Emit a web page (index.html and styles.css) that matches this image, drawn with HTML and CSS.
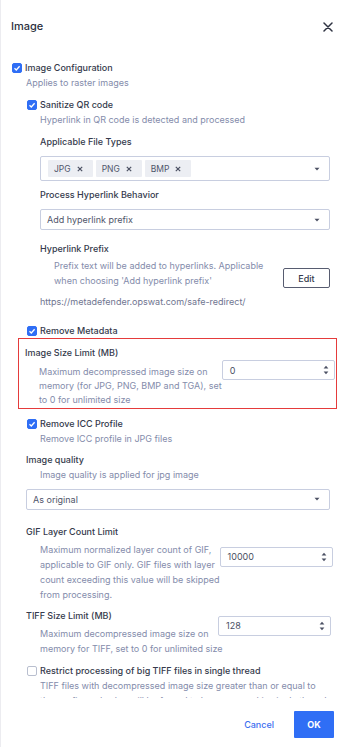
FILE: index.html
```html
<!DOCTYPE html>
<html lang="en">
<head>
<meta charset="utf-8">
<title>Image</title>
<link rel="stylesheet" href="styles.css">
</head>
<body>
<div class="dialog">
  <header class="header">
    <h1 class="title">Image</h1>
    <button class="close" aria-label="Close">
      <svg width="10" height="10" viewBox="0 0 10 10"><path d="M1 1L9 9M9 1L1 9" stroke="#2f3342" stroke-width="1.5" stroke-linecap="round"/></svg>
    </button>
  </header>

  <div class="body">
    <div class="check-row top-row">
      <span class="box on"><svg width="10" height="10" viewBox="0 0 10 10"><path d="M2.5 5.2L4.3 7L7.6 3.2" fill="none" stroke="#fff" stroke-width="1.3"/></svg></span>
      <span>Image Configuration</span>
    </div>
    <p class="desc ind1">Applies to raster images</p>

    <div class="check-row sub sanitize">
      <span class="box on"><svg width="10" height="10" viewBox="0 0 10 10"><path d="M2.5 5.2L4.3 7L7.6 3.2" fill="none" stroke="#fff" stroke-width="1.3"/></svg></span>
      <span>Sanitize QR code</span>
    </div>
    <p class="desc ind2">Hyperlink in QR code is detected and processed</p>

    <p class="label ind2 lbl-types">Applicable File Types</p>
    <div class="select multi ind2">
      <div class="chips">
        <span class="chip">JPG <svg width="6" height="6" viewBox="0 0 6 6"><path d="M0.8 0.8L5.2 5.2M5.2 0.8L0.8 5.2" stroke="#4b5063" stroke-width="1.2"/></svg></span>
        <span class="chip">PNG <svg width="6" height="6" viewBox="0 0 6 6"><path d="M0.8 0.8L5.2 5.2M5.2 0.8L0.8 5.2" stroke="#4b5063" stroke-width="1.2"/></svg></span>
        <span class="chip">BMP <svg width="6" height="6" viewBox="0 0 6 6"><path d="M0.8 0.8L5.2 5.2M5.2 0.8L0.8 5.2" stroke="#4b5063" stroke-width="1.2"/></svg></span>
      </div>
      <svg class="caret" width="6" height="4" viewBox="0 0 6 4"><path d="M0.5 0.8H5.5L3 3.4Z" fill="#4b5063"/></svg>
    </div>

    <p class="label ind2 lbl-process">Process Hyperlink Behavior</p>
    <div class="select ind2 sel-process">
      <span>Add hyperlink prefix</span>
      <svg class="caret" width="6" height="4" viewBox="0 0 6 4"><path d="M0.5 0.8H5.5L3 3.4Z" fill="#4b5063"/></svg>
    </div>

    <p class="label ind2 lbl-prefix">Hyperlink Prefix</p>
    <div class="prefix-row">
      <p class="desc">Prefix text will be added to hyperlinks. Applicable<br>when choosing 'Add hyperlink prefix'</p>
      <button class="edit">Edit</button>
    </div>
    <p class="url ind2">https://metadefender.opswat.com/safe-redirect/</p>

    <div class="check-row sub metadata">
      <span class="box on"><svg width="10" height="10" viewBox="0 0 10 10"><path d="M2.5 5.2L4.3 7L7.6 3.2" fill="none" stroke="#fff" stroke-width="1.3"/></svg></span>
      <span>Remove Metadata</span>
    </div>

    <div class="highlight">
      <div class="field">
        <div class="field-text">
          <p class="label">Image Size Limit (MB)</p>
          <p class="desc field-desc">Maximum decompressed image size on<br>memory (for JPG, PNG, BMP and TGA), set<br>to 0 for unlimited size</p>
        </div>
        <div class="number">
          <span>0</span>
          <svg class="spin" width="6" height="10" viewBox="0 0 6 10"><path d="M0.6 3.4H5.4L3 0.8Z M0.6 6.6H5.4L3 9.2Z" fill="#4b5063"/></svg>
        </div>
      </div>
    </div>

    <div class="check-row sub icc">
      <span class="box on"><svg width="10" height="10" viewBox="0 0 10 10"><path d="M2.5 5.2L4.3 7L7.6 3.2" fill="none" stroke="#fff" stroke-width="1.3"/></svg></span>
      <span>Remove ICC Profile</span>
    </div>
    <p class="desc ind2">Remove ICC profile in JPG files</p>

    <p class="label ind1 lbl-quality">Image quality</p>
    <p class="desc ind2">Image quality is applied for jpg image</p>
    <div class="select ind1 sel-quality">
      <span>As original</span>
      <svg class="caret" width="6" height="4" viewBox="0 0 6 4"><path d="M0.5 0.8H5.5L3 3.4Z" fill="#4b5063"/></svg>
    </div>

    <div class="field plain gif">
      <div class="field-text">
        <p class="label">GIF Layer Count Limit</p>
        <p class="desc field-desc">Maximum normalized layer count of GIF,<br>applicable to GIF only. GIF files with layer<br>count exceeding this value will be skipped<br>from processing.</p>
      </div>
      <div class="number">
        <span>10000</span>
        <svg class="spin" width="6" height="10" viewBox="0 0 6 10"><path d="M0.6 3.4H5.4L3 0.8Z M0.6 6.6H5.4L3 9.2Z" fill="#4b5063"/></svg>
      </div>
    </div>

    <div class="field plain tiff">
      <div class="field-text">
        <p class="label">TIFF Size Limit (MB)</p>
        <p class="desc field-desc nowrap">Maximum decompressed image size on<br>memory for TIFF, set to 0 for unlimited size</p>
      </div>
      <div class="number">
        <span>128</span>
        <svg class="spin" width="6" height="10" viewBox="0 0 6 10"><path d="M0.6 3.4H5.4L3 0.8Z M0.6 6.6H5.4L3 9.2Z" fill="#4b5063"/></svg>
      </div>
    </div>

    <div class="check-row sub restrict">
      <span class="box"></span>
      <span>Restrict processing of big TIFF files in single thread</span>
    </div>
    <p class="desc ind2">TIFF files with decompressed image size greater than or equal to<br>the configured value will be forced to be processed in single thread</p>
  </div>

  <footer class="footer">
    <button class="cancel">Cancel</button>
    <button class="ok">OK</button>
  </footer>
</div>
</body>
</html>
```

FILE: styles.css
```css
* { box-sizing: border-box; }
html, body { margin: 0; padding: 0; background: #fff; }
body {
  font-family: Inter, "Noto Sans", "Liberation Sans", sans-serif;
  font-size: 9px;
  color: #3a3e50;
}
p { margin: 0; }
button { font-family: inherit; cursor: pointer; }

.dialog {
  width: 341px;
  height: 747px;
  display: flex;
  flex-direction: column;
  background: #fff;
  border-left: 1px solid #ececf0;
}

.header {
  height: 44px;
  display: flex;
  align-items: flex-start;
  justify-content: space-between;
  padding: 18px 8px 0 10px;
}
.title {
  margin: 0;
  font-size: 11px;
  line-height: 16px;
  font-weight: 500;
  color: #2b2f3d;
}
.close {
  border: 0;
  background: none;
  padding: 0;
  margin-top: 4px;
  width: 10px;
  height: 10px;
  display: flex;
}

.body {
  flex: 1;
  overflow: hidden;
  padding: 0 11px 0 11px;
}

.check-row {
  display: flex;
  align-items: center;
  gap: 3px;
  height: 14px;
  line-height: 14px;
  font-weight: 500;
  color: #353a4c;
}
.check-row.sub { margin-left: 15px; }
.box {
  width: 10px;
  height: 10px;
  border-radius: 2px;
  border: 1px solid #b9bfcf;
  background: #fff;
  display: flex;
  flex: none;
}
.box.on { background: #2f6ef5; border-color: #2f6ef5; }
.box.on svg { margin: -1px; }

.top-row { margin-top: 17px; }
.sanitize { margin-top: 8px; }
.metadata { margin-top: 15px; }
.icc { margin-top: 8px; }
.restrict { margin-top: 8px; }

.desc {
  line-height: 15px;
  color: #848cab;
}
.label {
  line-height: 15px;
  font-weight: 500;
  color: #353a4c;
}
.ind1 { margin-left: 14px; }
.ind2 { margin-left: 28px; }

.lbl-types { margin-top: 7px; }
.lbl-process { margin-top: 6px; }
.lbl-prefix { margin-top: 11px; }
.lbl-quality { margin-top: 6px; }

.select {
  display: flex;
  align-items: center;
  justify-content: space-between;
  height: 21px;
  border: 1px solid #c8cee0;
  border-radius: 2px;
  padding: 0 9px 0 6px;
  color: #50556a;
  background: #fff;
}
.select.multi { height: 25px; margin-top: 7px; padding-left: 7px; }
.sel-process { margin-top: 7px; }
.sel-quality { margin-top: 7px; }
.caret { flex: none; }

.chips { display: flex; gap: 3px; }
.chip {
  display: flex;
  align-items: center;
  gap: 6px;
  height: 17px;
  padding: 0 10px 0 6px;
  background: #eceef3;
  border-radius: 1px;
  color: #50556a;
  font-size: 8.5px;
}

.prefix-row {
  display: flex;
  align-items: flex-end;
  justify-content: space-between;
  margin-top: 2px;
  margin-left: 42px;
}
.edit {
  width: 47px;
  height: 20px;
  border: 1.5px solid #575c70;
  border-radius: 2px;
  background: #fff;
  font-size: 9px;
  font-weight: 500;
  color: #353a4c;
  padding: 0;
}
.url {
  margin-top: 6px;
  line-height: 15px;
  color: #6f7590;
}

.highlight {
  margin-left: 6px;
  margin-right: -7px;
  border: 1px solid #e53b3b;
  padding: 6px 6px 0 6px;
}

.field {
  display: flex;
  align-items: center;
  justify-content: space-between;
}
.field.plain { margin-left: 14px; }
.gif { margin-top: 14px; }
.tiff { margin-top: 6px; }
.field-text { flex: none; }
.field-desc { margin: 3px 0 0 14px; }
.highlight .field-desc { margin-top: 5px; line-height: 14.2px; }
.nowrap { white-space: nowrap; width: 0; overflow: visible; }

.number {
  width: 113px;
  height: 20px;
  margin-bottom: 12px;
  flex: none;
  display: flex;
  align-items: center;
  justify-content: space-between;
  border: 1px solid #c8cee0;
  border-radius: 2px;
  padding: 0 5px 0 7px;
  color: #4a4f63;
  background: #fff;
}
.tiff .field-text { width: 192px; }

.footer {
  height: 49px;
  display: flex;
  align-items: flex-start;
  justify-content: flex-end;
  gap: 20px;
  padding: 13px 7px 0 0;
  background: #fff;
}
.cancel {
  border: 0;
  background: none;
  height: 27px;
  padding: 0;
  font-size: 9px;
  font-weight: 500;
  color: #3d6ef0;
}
.ok {
  width: 40px;
  height: 27px;
  border: 0;
  border-radius: 1px;
  background: #2f6ef5;
  color: #fff;
  font-size: 9px;
  font-weight: 700;
  padding: 0;
}
```
